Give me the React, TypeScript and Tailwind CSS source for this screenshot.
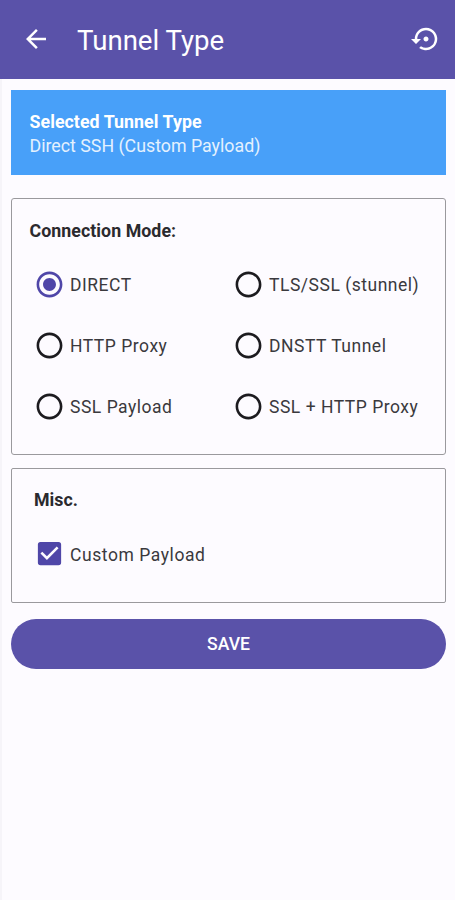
import { useState } from "react";
import {
  MdArrowBack,
  MdCheckBox,
  MdCheckBoxOutlineBlank,
  MdRadioButtonChecked,
  MdRadioButtonUnchecked,
  MdSettingsBackupRestore,
} from "react-icons/md";

const modes = [
  "DIRECT",
  "TLS/SSL (stunnel)",
  "HTTP Proxy",
  "DNSTT Tunnel",
  "SSL Payload",
  "SSL + HTTP Proxy",
];

interface ModeOptionProps {
  label: string;
  selected: boolean;
  onSelect: () => void;
}

function ModeOption({ label, selected, onSelect }: ModeOptionProps) {
  return (
    <button
      type="button"
      role="radio"
      aria-checked={selected}
      onClick={onSelect}
      className="flex h-[61px] items-center gap-[5px] whitespace-nowrap"
    >
      {selected ? (
        <MdRadioButtonChecked className="size-[31px] shrink-0 text-[#4f46a8]" />
      ) : (
        <MdRadioButtonUnchecked className="size-[31px] shrink-0 text-[#1c1b1f]" />
      )}
      <span className="text-[17.5px] leading-6 tracking-[0.52px]">{label}</span>
    </button>
  );
}

export default function App() {
  const [mode, setMode] = useState("DIRECT");
  const [customPayload, setCustomPayload] = useState(true);

  return (
    <div className="h-[900px] w-[455px] overflow-hidden bg-[#fdfbff] font-[Roboto,sans-serif] text-[#3a393d]">
      <header className="flex h-[79px] items-center bg-[#5a52a9] pr-[14.5px] pl-[21px] text-white">
        <button type="button" aria-label="Back" className="pb-[2px]">
          <MdArrowBack className="size-[30px]" />
        </button>
        <h1 className="ml-[26px] flex-1 pt-0.5 text-[27.6px] leading-8">
          Tunnel Type
        </h1>
        <button type="button" aria-label="Reset" className="pb-[2px]">
          <MdSettingsBackupRestore className="size-[30px]" />
        </button>
      </header>

      <main className="h-full border-l-2 border-[#f6f4f9] pt-[11px] pr-[9px] pl-[9px]">
        <section className="h-[85px] bg-[#48a0f9] px-[18.5px] pt-[20px] text-[17.8px] leading-6 text-white">
          <h2 className="font-bold tracking-[0.05px]">Selected Tunnel Type</h2>
          <p className="text-[#e4f1fe]">Direct SSH (Custom Payload)</p>
        </section>

        <section className="mt-[23px] h-[257px] rounded-[3px] border border-[#9a999d] px-[17px] pt-[20px]">
          <h2 className="ml-[0.5px] text-[17.8px] leading-6 font-bold tracking-[0.05px] text-[#2b2a2e]">
            Connection Mode:
          </h2>
          <div
            role="radiogroup"
            className="mt-[11px] ml-[5px] grid grid-cols-[199px_auto]"
          >
            {modes.map((item) => (
              <ModeOption
                key={item}
                label={item}
                selected={mode === item}
                onSelect={() => setMode(item)}
              />
            ))}
          </div>
        </section>

        <section className="mt-[13px] h-[135px] rounded-[2px] border border-[#9a999d] px-[22px] pt-[19px]">
          <h2 className="text-[17.8px] leading-6 font-bold text-[#2b2a2e]">
            Misc.
          </h2>
          <button
            type="button"
            role="checkbox"
            aria-checked={customPayload}
            onClick={() => setCustomPayload(!customPayload)}
            className="mt-[11px] flex h-[61px] items-center gap-[5px]"
          >
            {customPayload ? (
              <MdCheckBox className="size-[31px] text-[#4f46a8]" />
            ) : (
              <MdCheckBoxOutlineBlank className="size-[31px] text-[#1c1b1f]" />
            )}
            <span className="pt-0.5 text-[17.5px] leading-6 tracking-[0.57px]">
              Custom Payload
            </span>
          </button>
        </section>

        <button
          type="button"
          className="mt-[16px] h-[50px] w-full rounded-full bg-[#5a52a9] pt-px text-[17.6px] font-medium text-white"
        >
          SAVE
        </button>
      </main>
    </div>
  );
}
